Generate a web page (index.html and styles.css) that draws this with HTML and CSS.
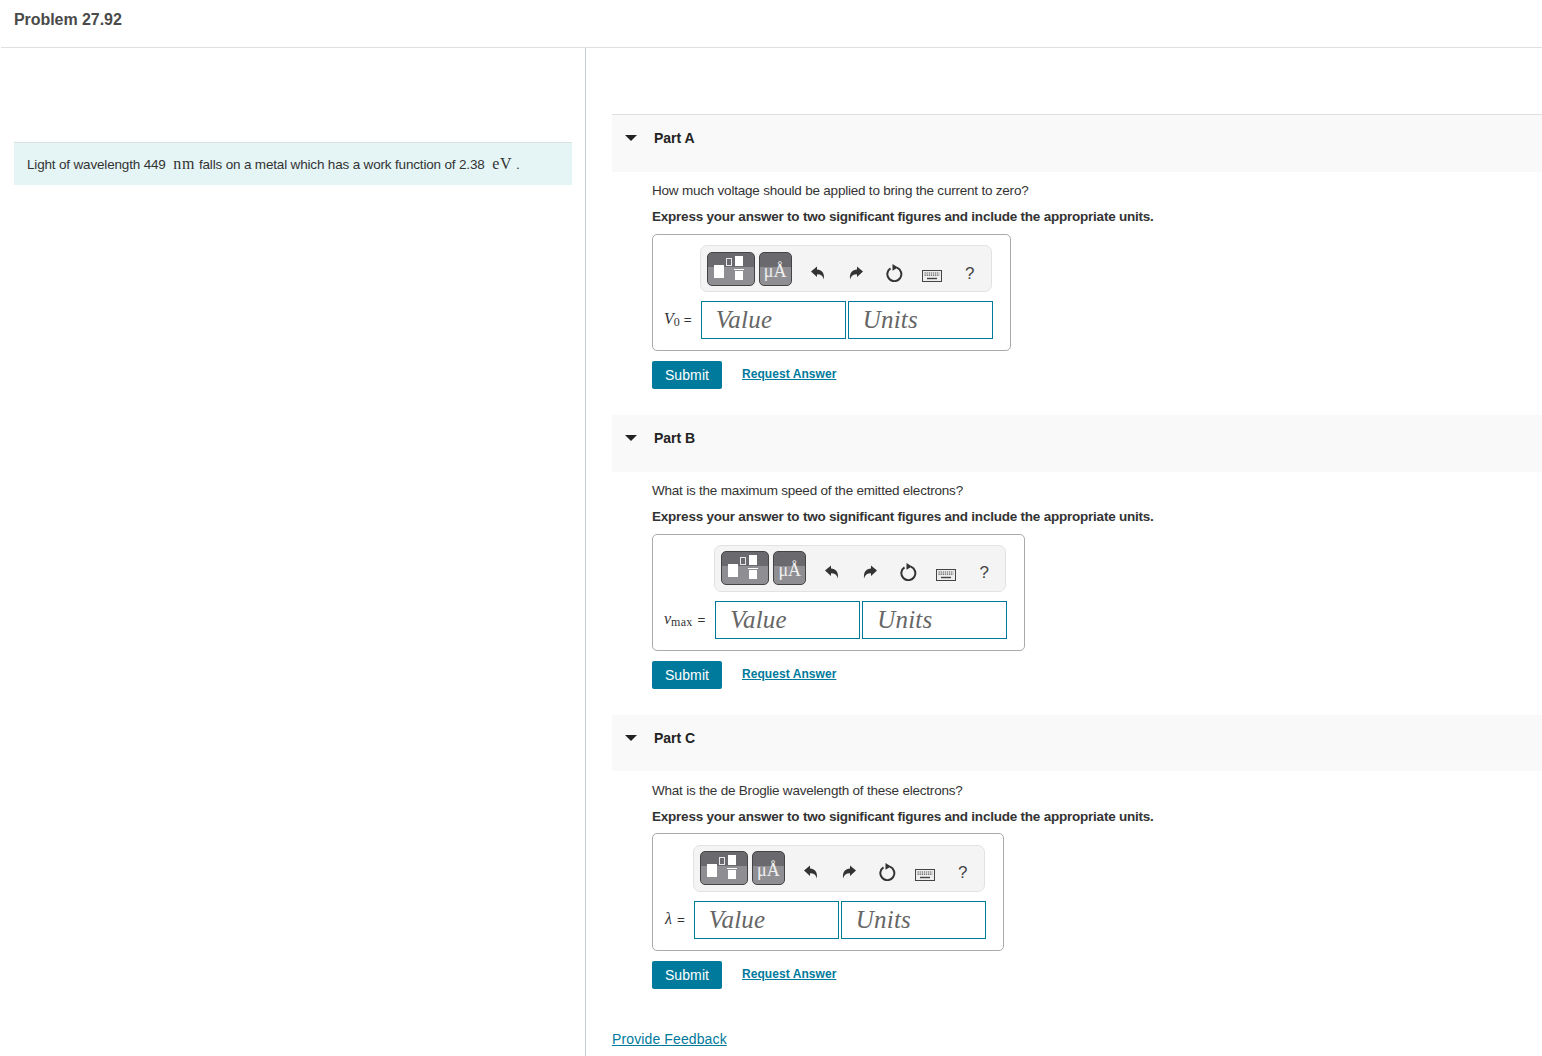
FILE: index.html
```html
<!DOCTYPE html>
<html lang="en">
<head>
<meta charset="utf-8">
<title>Problem 27.92</title>
<link rel="stylesheet" href="styles.css">
</head>
<body>
<svg class="defs" width="0" height="0" aria-hidden="true">
  <defs>
    <symbol id="i-tpl" viewBox="0 0 48 34">
      <rect x="7" y="13" width="10" height="13" fill="#fff"/>
      <rect x="19.500" y="6.500" width="5" height="7" fill="none" stroke="#e8e8e8"/>
      <rect x="28" y="4" width="8" height="10" fill="#fff"/>
      <rect x="27" y="17" width="10" height="1" fill="#fff"/>
      <rect x="28" y="19" width="8" height="9" fill="#fff"/>
    </symbol>
    <symbol id="i-undo" viewBox="0 0 16 16">
      <path d="M1 6.500 7 1.500V4.600C11.600 4.800 14.600 7.600 14 14.500 13 11 11 9.200 7 9.200V12Z" fill="#333"/>
    </symbol>
    <symbol id="i-redo" viewBox="0 0 16 16">
      <path d="M15 6.500 9 1.500V4.600C4.400 4.800 1.400 7.600 2 14.500 3 11 5 9.200 9 9.200V12Z" fill="#333"/>
    </symbol>
    <symbol id="i-reset" viewBox="0 0 18 18">
      <path d="M5.500 4.300A7 7 0 1 0 12 3.700" fill="none" stroke="#333" stroke-width="2"/>
      <path d="M7.500 0 13 3.600 7.500 6.800Z" fill="#333"/>
    </symbol>
    <symbol id="i-keys" viewBox="0 0 20 12">
      <rect x=".5" y=".5" width="19" height="11" fill="#eee" stroke="#444"/>
      <path d="M2.500 3h15M2.500 5.200h15" stroke="#555" stroke-width="1.200" stroke-dasharray="1.300 .8" fill="none"/>
      <path d="M5 8.500h10" stroke="#444" stroke-width="1.400"/>
    </symbol>
  </defs>
</svg>

<header class="page-head"><h1 class="page-title">Problem 27.92</h1></header>

<main class="layout">
  <aside class="intro-col">
    <p class="intro">Light of wavelength 449 <span class="math-unit">nm</span> falls on a metal which has a work function of 2.38 <span class="math-unit">eV</span> .</p>
  </aside>

  <section class="parts-col">
    <article class="part part-first">
      <div class="part-head"><span class="caret"></span><h2 class="part-title">Part A</h2></div>
      <div class="part-body">
        <p class="question">How much voltage should be applied to bring the current to zero?</p>
        <p class="instruction">Express your answer to two significant figures and include the appropriate units.</p>
        <div class="widget">
          <div class="var-label var-v0"><i>V</i><sub class="sub-num">0</sub> <span class="eq">=</span></div>
          <div class="answer">
            <div class="toolbar">
              <button class="tool-btn tool-tpl" type="button"><svg width="48" height="34"><use href="#i-tpl"/></svg></button>
              <button class="tool-btn tool-unit" type="button">μÅ</button>
              <span class="tool tool-first"><svg width="16" height="16"><use href="#i-undo"/></svg></span>
              <span class="tool"><svg width="16" height="16"><use href="#i-redo"/></svg></span>
              <span class="tool"><svg width="18" height="18"><use href="#i-reset"/></svg></span>
              <span class="tool tool-keys"><svg width="20" height="12"><use href="#i-keys"/></svg></span>
              <span class="tool tool-help">?</span>
            </div>
            <div class="fields"><span class="field">Value</span><span class="field">Units</span></div>
          </div>
        </div>
        <div class="actions"><button class="submit" type="button">Submit</button><a class="request" href="#">Request Answer</a></div>
      </div>
    </article>

    <article class="part">
      <div class="part-head"><span class="caret"></span><h2 class="part-title">Part B</h2></div>
      <div class="part-body">
        <p class="question">What is the maximum speed of the emitted electrons?</p>
        <p class="instruction">Express your answer to two significant figures and include the appropriate units.</p>
        <div class="widget">
          <div class="var-label"><i>v</i><sub class="sub-word">max</sub> <span class="eq">=</span></div>
          <div class="answer">
            <div class="toolbar">
              <button class="tool-btn tool-tpl" type="button"><svg width="48" height="34"><use href="#i-tpl"/></svg></button>
              <button class="tool-btn tool-unit" type="button">μÅ</button>
              <span class="tool tool-first"><svg width="16" height="16"><use href="#i-undo"/></svg></span>
              <span class="tool"><svg width="16" height="16"><use href="#i-redo"/></svg></span>
              <span class="tool"><svg width="18" height="18"><use href="#i-reset"/></svg></span>
              <span class="tool tool-keys"><svg width="20" height="12"><use href="#i-keys"/></svg></span>
              <span class="tool tool-help">?</span>
            </div>
            <div class="fields"><span class="field">Value</span><span class="field">Units</span></div>
          </div>
        </div>
        <div class="actions"><button class="submit" type="button">Submit</button><a class="request" href="#">Request Answer</a></div>
      </div>
    </article>

    <article class="part part-last">
      <div class="part-head"><span class="caret"></span><h2 class="part-title">Part C</h2></div>
      <div class="part-body">
        <p class="question">What is the de Broglie wavelength of these electrons?</p>
        <p class="instruction">Express your answer to two significant figures and include the appropriate units.</p>
        <div class="widget">
          <div class="var-label var-lambda"><i>λ</i> <span class="eq">=</span></div>
          <div class="answer">
            <div class="toolbar">
              <button class="tool-btn tool-tpl" type="button"><svg width="48" height="34"><use href="#i-tpl"/></svg></button>
              <button class="tool-btn tool-unit" type="button">μÅ</button>
              <span class="tool tool-first"><svg width="16" height="16"><use href="#i-undo"/></svg></span>
              <span class="tool"><svg width="16" height="16"><use href="#i-redo"/></svg></span>
              <span class="tool"><svg width="18" height="18"><use href="#i-reset"/></svg></span>
              <span class="tool tool-keys"><svg width="20" height="12"><use href="#i-keys"/></svg></span>
              <span class="tool tool-help">?</span>
            </div>
            <div class="fields"><span class="field">Value</span><span class="field">Units</span></div>
          </div>
        </div>
        <div class="actions"><button class="submit" type="button">Submit</button><a class="request" href="#">Request Answer</a></div>
      </div>
    </article>

    <a class="feedback" href="#">Provide Feedback</a>
  </section>
</main>
</body>
</html>
```

FILE: styles.css
```css
* { box-sizing: border-box; }
html, body { margin: 0; padding: 0; }
body {
  height: 1056px;
  overflow: hidden;
  background: #fff;
  color: #333;
  font-family: "Liberation Sans", Arial, sans-serif;
  font-size: 13.5px;
}
.defs { position: absolute; }
.page-head {
  height: 48px;
  margin-left: 1px;
  padding: 11px 13px 0;
  border-bottom: 1px solid #e0e0e0;
}
.page-title {
  margin: 0;
  font-size: 16px;
  line-height: 18px;
  font-weight: 700;
  letter-spacing: -.06px;
  color: #4a4a4a;
}
.layout { display: flex; height: 1008px; }
.intro-col {
  width: 586px;
  flex: none;
  padding: 94px 13px 0 14px;
  border-right: 1px solid #c4ccd4;
}
.intro {
  margin: 0;
  height: 43px;
  padding: 0 13px;
  display: flex;
  align-items: center;
  white-space: pre-wrap;
  background: #e5f5f6;
  border-top: 1px solid #d8e0e0;
  font-size: 13.5px;
  letter-spacing: -.17px;
  color: #333;
}
.math-unit {
  font-family: "Liberation Serif", serif;
  font-size: 16px;
  letter-spacing: .8px;
  margin-left: 4px;
}
.parts-col { flex: 1; padding: 66px 0 0 26px; }
.part { height: 300px; }
.part-first { height: 301px; }
.part-head {
  height: 57px;
  background: #f9f9f9;
  display: flex;
  align-items: flex-start;
  padding-top: 15px;
}
.part-first .part-head { border-top: 1px solid #e0e0e0; height: 58px; }
.part-last .part-head { height: 56px; }
.caret {
  width: 0;
  height: 0;
  margin: 5px 0 0 13px;
  border-left: 6px solid transparent;
  border-right: 6px solid transparent;
  border-top: 6px solid #222;
}
.part-title {
  margin: 0 0 0 17px;
  font-size: 14px;
  line-height: 17px;
  font-weight: 700;
  color: #222;
}
.part-body { padding: 10px 0 0 40px; }
.part-last .part-body { padding-top: 11px; }
.question { margin: 0; line-height: 17px; font-size: 13.5px; letter-spacing: -.215px; }
.instruction { margin: 9px 0 0; line-height: 17px; font-size: 13.5px; font-weight: 700; letter-spacing: -.225px; }
.widget {
  display: flex;
  width: fit-content;
  margin-top: 9px;
  height: 117px;
  padding: 10px 18px 0 11px;
  border: 1px solid #aaa;
  border-radius: 5px;
}
.part-last .widget { margin-top: 8px; height: 118px; padding-top: 11px; }
.var-label {
  align-self: flex-start;
  margin-top: 64px;
  padding-right: 9px;
  font-family: "Liberation Serif", serif;
  font-size: 16px;
  line-height: 20px;
  white-space: nowrap;
  color: #333;
}
.var-v0 { padding-right: 8px; }
.var-v0 .eq { margin-left: 0; }
.var-lambda { padding: 0 8px 0 1px; }
.eq { font-family: "Liberation Sans", sans-serif; font-size: 13.5px; margin-left: 1px; }
.sub-num, .sub-word { line-height: 0; vertical-align: -2px; }
.sub-num { font-size: 12px; }
.sub-word { font-size: 12px; letter-spacing: .2px; }
.answer { width: 292px; }
.toolbar {
  display: flex;
  align-items: center;
  width: 292px;
  height: 47px;
  padding: 0 0 0 6px;
  background: #f4f4f4;
  border: 1px solid #e2e2e2;
  border-radius: 7px;
}
.tool-btn {
  height: 34px;
  margin: 1px 0 0;
  padding: 0;
  border: 1px solid #444;
  border-radius: 5px;
  background: linear-gradient(#6a6a6e 0 43%, #8f8f93 43% 100%);
  display: block;
}
.part:not(.part-first) .tool-btn { margin-top: -1px; }
.tool-tpl { width: 48px; }
.tool-tpl svg { display: block; margin: -1px; }
.tool-unit {
  width: 33px;
  margin-left: 4px;
  padding-top: 3px;
  font-family: "Liberation Serif", serif;
  font-size: 18px;
  line-height: 28px;
  color: #f0f0f0;
}
.tool {
  width: 38px;
  height: 20px;
  flex: none;
  display: flex;
  align-items: center;
  justify-content: center;
  margin-top: 8px;
}
.tool-first { margin-left: 7px; }
.tool-keys { margin-top: 14px; }
.tool-help { margin-top: 10px; font-size: 17px; color: #444; }
.part:not(.part-first) .tool { margin-top: 6px; }
.part:not(.part-first) .tool-keys { margin-top: 12px; }
.part:not(.part-first) .tool-help { margin-top: 8px; }
.fields { display: flex; gap: 2px; margin-top: 9px; margin-left: 1px; width: 292px; }
.field {
  width: 145px;
  height: 38px;
  padding: 0 14px;
  border: 1px solid #007a9c;
  font-family: "Liberation Serif", serif;
  font-size: 25px;
  font-style: italic;
  line-height: 36px;
  letter-spacing: .2px;
  color: #666;
}
.actions { display: flex; align-items: center; margin-top: 10px; }
.submit {
  width: 70px;
  height: 28px;
  padding: 0;
  border: 0;
  border-radius: 2px;
  background: #007a9c;
  color: #fff;
  font-family: "Liberation Sans", sans-serif;
  font-size: 14px;
  letter-spacing: .1px;
}
.request {
  margin-left: 20px;
  padding-bottom: 2px;
  font-size: 12px;
  font-weight: 700;
  letter-spacing: .06px;
  color: #007a9c;
}
.feedback {
  display: block;
  margin-top: 16px;
  font-size: 14px;
  line-height: 17px;
  letter-spacing: .12px;
  color: #007a9c;
}
```
